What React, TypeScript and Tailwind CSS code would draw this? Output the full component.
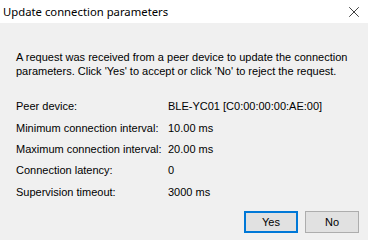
import { X } from "lucide-react";

const rows = [
  { label: "Peer device:", value: "BLE-YC01 [C0:00:00:00:AE:00]" },
  { label: "Minimum connection interval:", value: "10.00 ms" },
  { label: "Maximum connection interval:", value: "20.00 ms" },
  { label: "Connection latency:", value: "0" },
  { label: "Supervision timeout:", value: "3000 ms" },
];

const App = () => {
  return (
    <div className="w-[368px] h-[240px] flex flex-col bg-[#f0f0f0] text-black overflow-hidden">
      {/* Title bar */}
      <div className="h-[23px] bg-white flex items-center justify-between pl-[3px] pr-[5px]">
        <span className="text-[11.3px] font-['Noto_Sans',sans-serif] leading-none">Update connection parameters</span>
        <X size={18} strokeWidth={1} className="text-black" />
      </div>

      <div className="flex flex-col flex-1 px-4 font-['Liberation_Sans',Arial,sans-serif] text-[11px]">
        <p className="mt-[27px] leading-[14px]">
          A request was received from a peer device to update the connection parameters. Click 'Yes' to accept or click 'No' to reject the request.
        </p>

        {/* Parameters */}
        <div className="mt-[18px] flex flex-col">
          {rows.map(row => (
            <div key={row.label} className="flex h-[21.3px] items-center">
              <span className="w-[152px]">{row.label}</span>
              <span>{row.value}</span>
            </div>
          ))}
        </div>

        {/* Buttons */}
        <div className="mt-auto mb-[7px] flex justify-end gap-[7px] -mr-[7px]">
          <button className="w-[54px] h-[22px] bg-[#e1e1e1] border-2 border-[#0078d7] text-[11px]">Yes</button>
          <button className="w-[54px] h-[22px] bg-[#e1e1e1] border border-[#adadad] text-[11px]">No</button>
        </div>
      </div>
    </div>
  );
};

export default App;
